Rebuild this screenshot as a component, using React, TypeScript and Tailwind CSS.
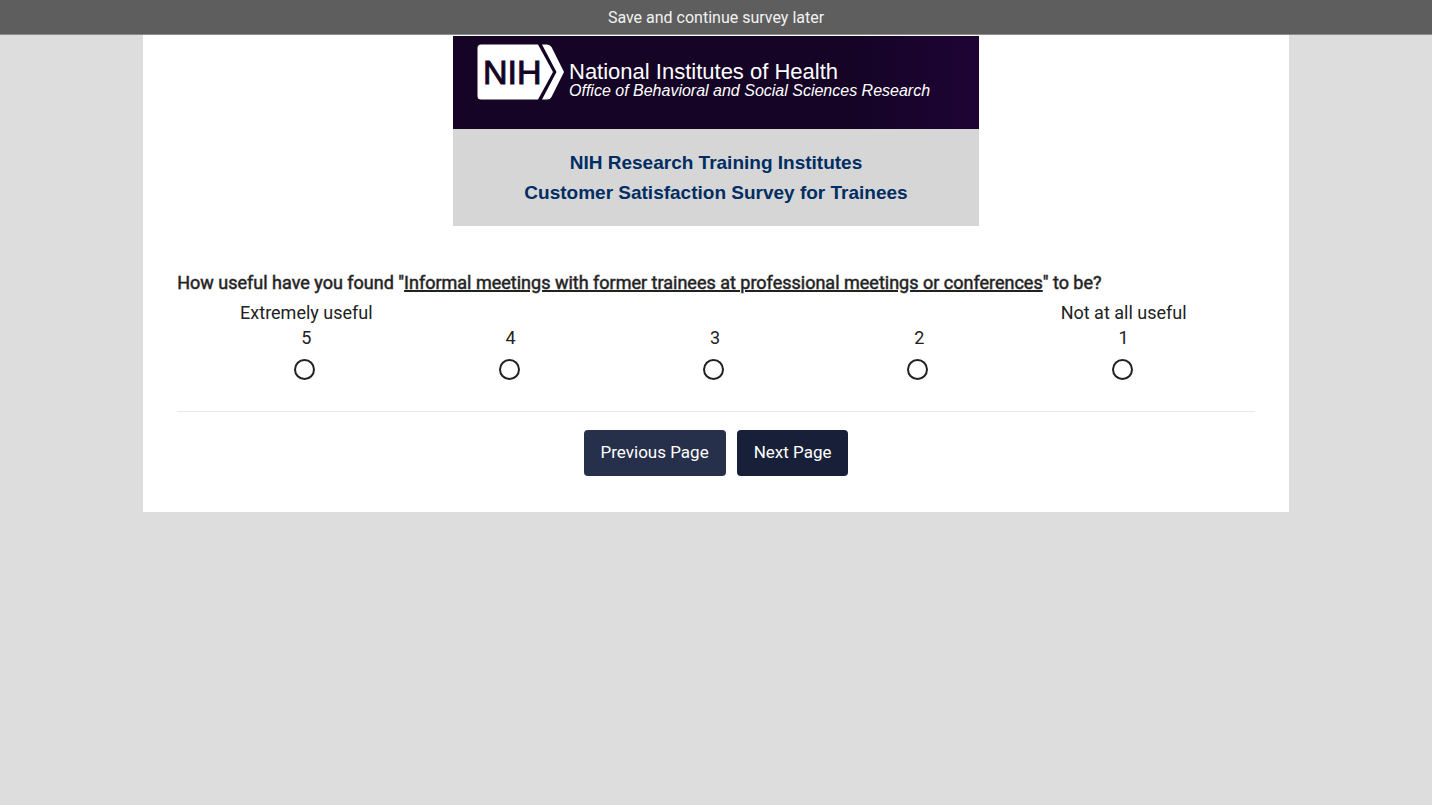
import { FC } from "react";

const options = [
  { value: "5", label: "Extremely useful" },
  { value: "4", label: "" },
  { value: "3", label: "" },
  { value: "2", label: "" },
  { value: "1", label: "Not at all useful" },
];

const NihLogo: FC = () => (
  <svg viewBox="0 0 88 56" className="w-[88px] h-14 shrink-0" role="img">
    <path
      d="M4 0.5 H61 L76 28 L61 55.500 H4 Q0.5 55.500 0.5 52 V4 Q0.5 0.5 4 0.5 Z"
      fill="#fff"
    />
    <path
      d="M65 0.5 H70 Q73 0.5 74.500 3 L87 28 L74.500 53 Q73 55.500 70 55.500 H65 L79.500 28 Z"
      fill="#fff"
    />
    <text
      x="6"
      y="40"
      fill="#150426"
      fontSize="34"
      fontFamily="Liberation Sans, Arial, sans-serif"
      stroke="#150426"
      strokeWidth="1"
    >
      NIH
    </text>
  </svg>
);

const Banner: FC = () => (
  <header className="mx-auto w-full max-w-[526px] pt-px font-['Liberation_Sans',Arial,sans-serif]">
    <div className="flex h-[93px] items-start gap-1 bg-linear-to-r from-[#150426] from-75% to-[#1e0435] pl-6 pt-2">
      <NihLogo />
      <div className="whitespace-nowrap text-white pt-[17px]">
        <p className="text-[22px] leading-[22px]">
          National Institutes of Health
        </p>
        <p className="text-base leading-4 italic">
          Office of Behavioral and Social Sciences Research
        </p>
      </div>
    </div>
    <h1 className="bg-[#d6d6d6] px-4 pt-[19px] pb-[18px] text-center text-[19px] leading-[30px] font-bold text-[#002d62]">
      NIH Research Training Institutes
      <br />
      Customer Satisfaction Survey for Trainees
    </h1>
  </header>
);

const App: FC = () => {
  return (
    <div className="min-h-screen bg-[#dddddd] font-[Roboto,sans-serif] text-[#212121]">
      <div className="h-[35px] border-b border-[#8c8c8c] bg-[#5e5e5e] text-center">
        <a href="#save" className="text-base leading-9 text-[#f2f2f2]">
          Save and continue survey later
        </a>
      </div>
      <main className="mx-auto w-4/5 bg-white px-[34px] pb-9">
        <Banner />
        <form onSubmit={(e) => e.preventDefault()}>
          <fieldset className="pt-[43px]">
            <legend className="contents">
              <span className="block text-lg leading-7 [-webkit-text-stroke:1px_#21212180]">
                How useful have you found "
                <u className="underline decoration-[#212121] decoration-2">
                  Informal meetings with former trainees at professional
                  meetings or conferences
                </u>
                " to be?
              </span>
            </legend>
            <div className="grid grid-cols-5 pl-[27px] pr-[29px] pt-[3px]">
              {options.map((option) => (
                <label
                  key={option.value}
                  className="flex flex-col items-center text-lg leading-[25px]"
                >
                  <span className="h-[25px]">{option.label}</span>
                  <span>{option.value}</span>
                  <input
                    type="radio"
                    name="usefulness"
                    value={option.value}
                    className="mt-[9px] mr-[3px] size-[21px] appearance-none rounded-full border-2 border-[#212121] bg-white checked:bg-[#212121]"
                  />
                </label>
              ))}
            </div>
          </fieldset>
          <div className="mt-[31px] flex justify-center gap-[11px] border-t border-[#e8e8e8] pt-[18px]">
            <button
              type="button"
              className="h-[46px] rounded-sm bg-[#27304a] px-[17px] text-[17px] text-white"
            >
              Previous Page
            </button>
            <button
              type="submit"
              className="h-[46px] rounded-sm bg-[#181f38] px-[17px] text-[17px] text-white"
            >
              Next Page
            </button>
          </div>
        </form>
      </main>
    </div>
  );
};

export default App;
